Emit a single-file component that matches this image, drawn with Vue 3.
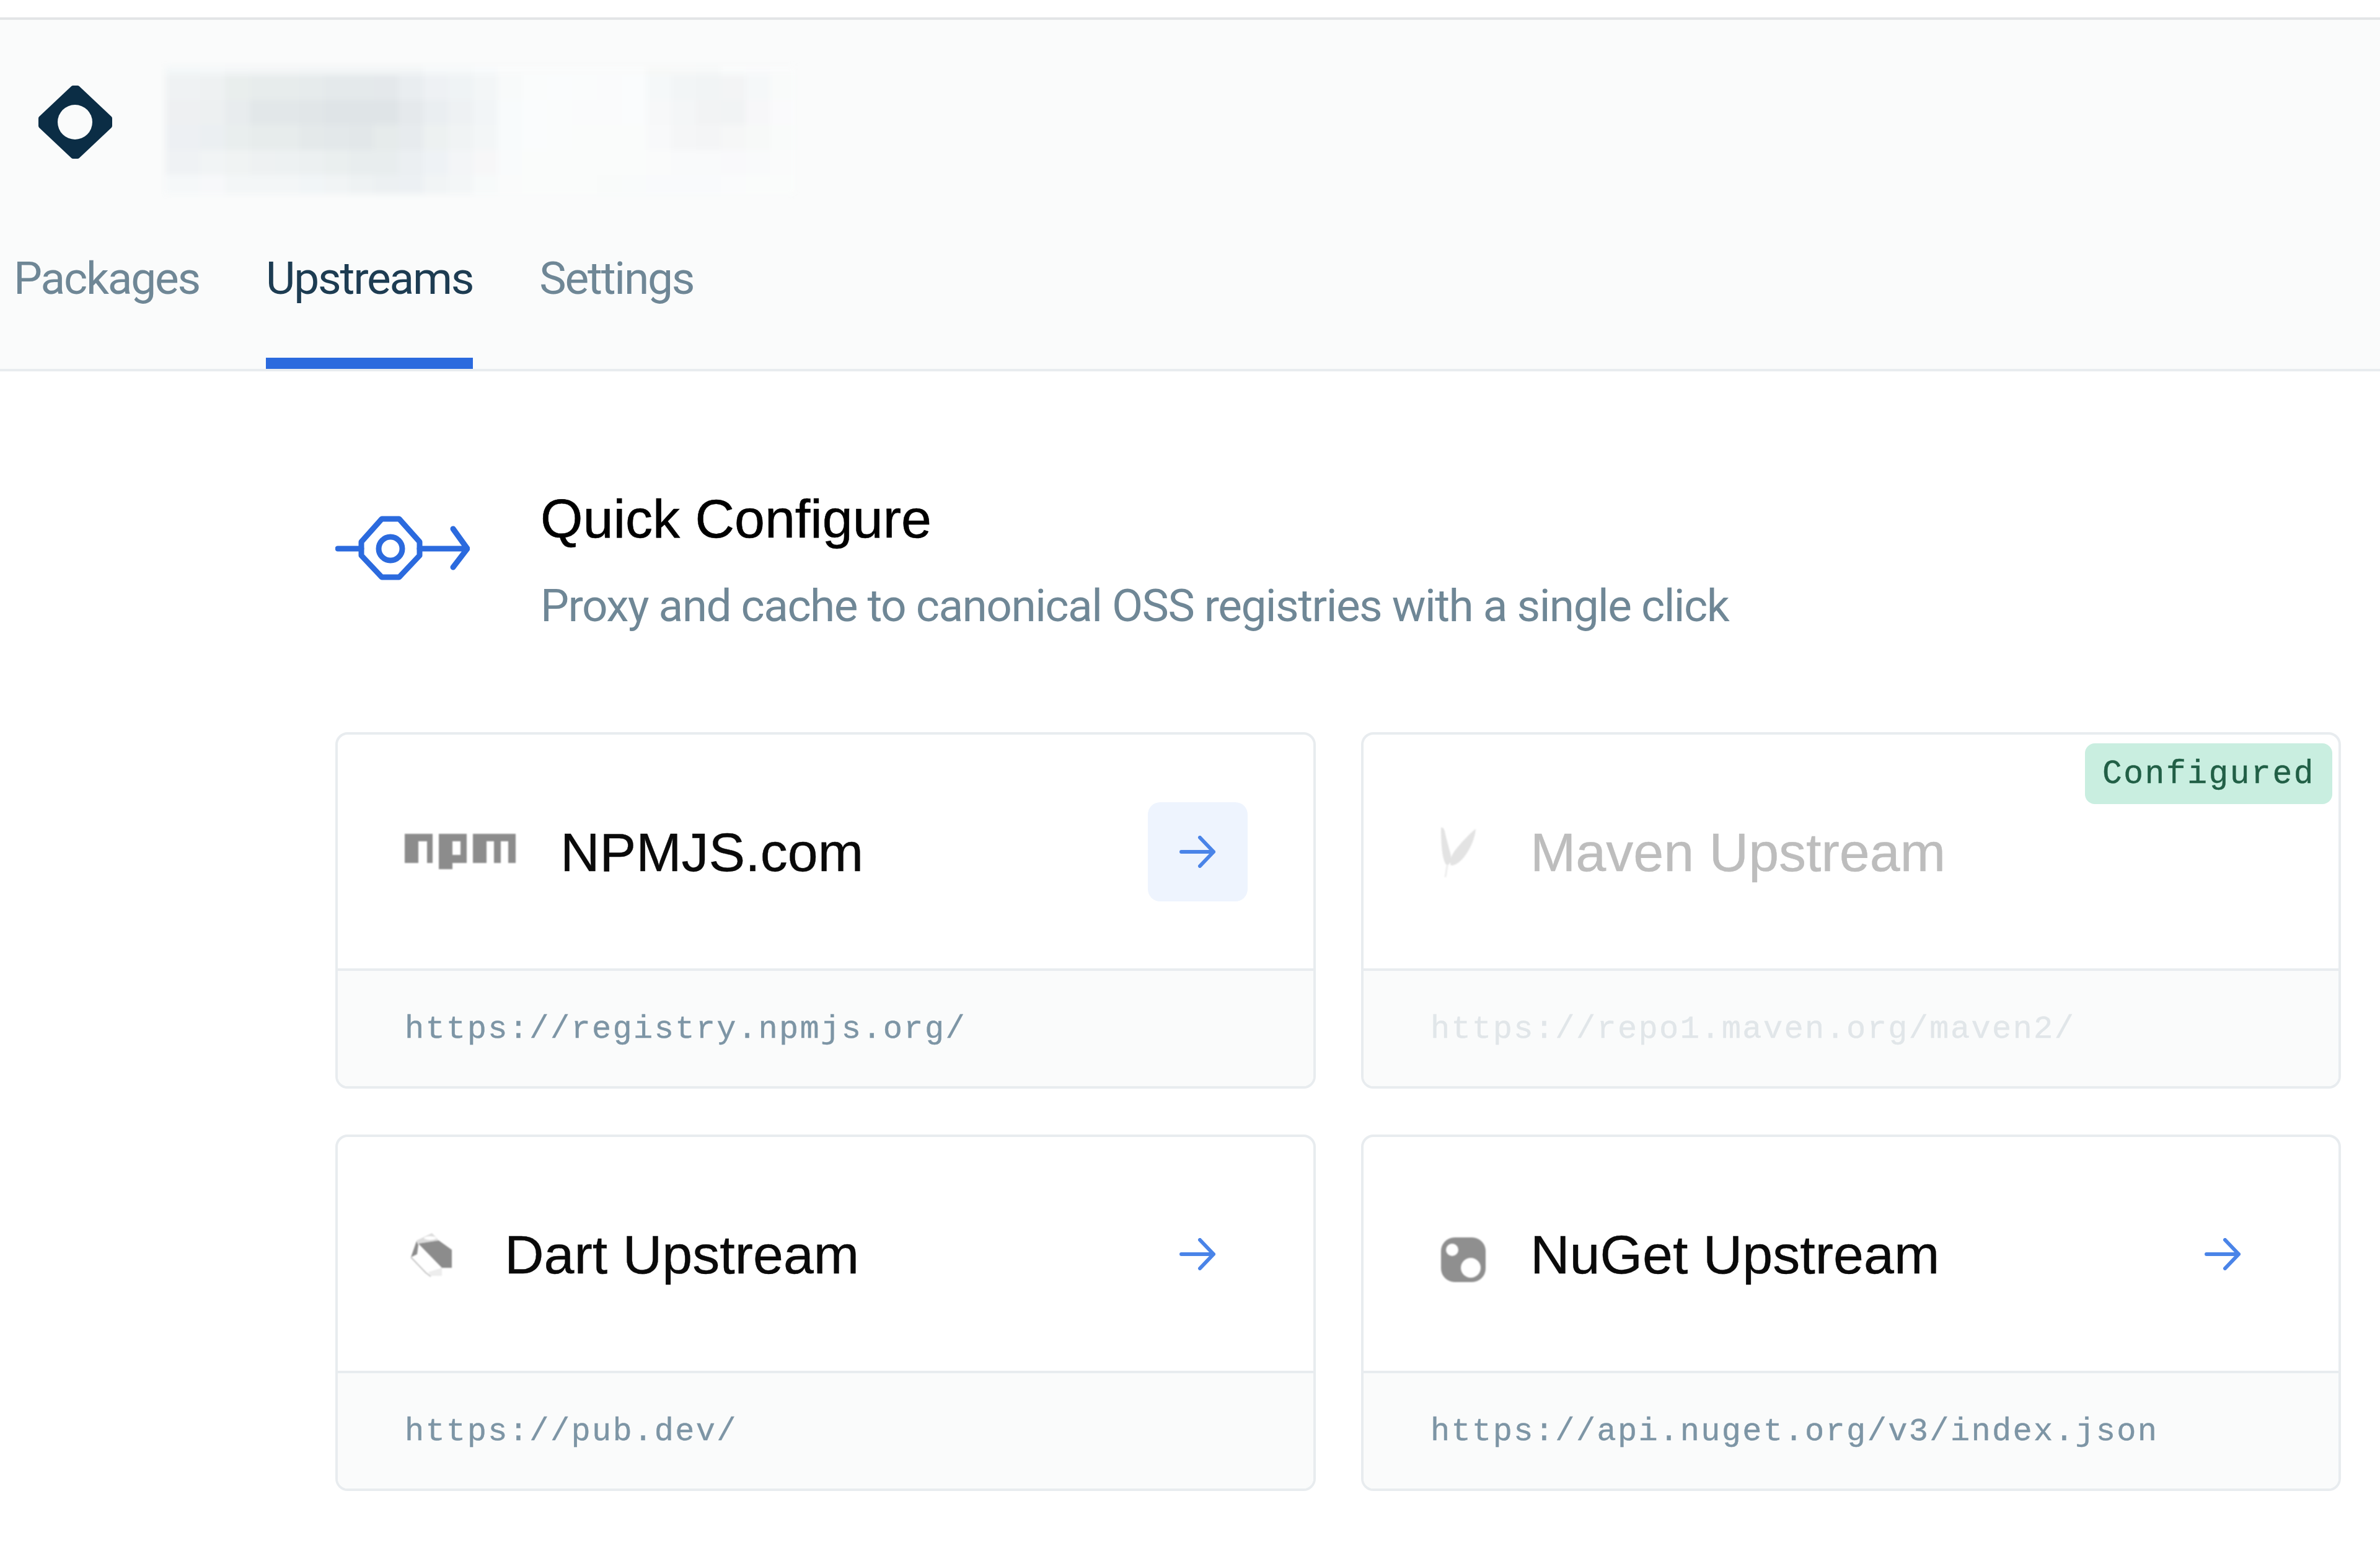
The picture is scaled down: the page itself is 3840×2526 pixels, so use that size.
<script setup>
const blurColors = [
  'f3f7f8 f4f7f8 f3f6f7 f3f5f6 f3f5f6 f2f5f6 f2f5f6 f2f5f6 f2f5f6 f2f5f6 f5f8f9 f5f8f9 f7fafb fafbfb fafbfb fafbfb fafbfb fafbfb fafbfb f7f8f7 f7f8f8 f6f8f8 f9fbfb f9fafb fafbfb',
  'eff2f3 eef1f2 e9eeed e7ecec e7ecec e6ebec e4e9eb e4e9eb e4e8eb e9edf0 eef1f4 eff3f5 f3f6f7 f8fafa fafcfc fafcfd fafcfc fafbfc fafcfd f5f8f9 f2f5f6 f1f4f5 f3f4f5 f5f8f9 f9fbfa',
  'eef0f2 edf0f1 e8ecee e2e7e9 e2e7e9 e1e6e8 dfe4e7 dfe4e7 dfe4e7 e5e9ec eaeef1 eef1f3 f2f5f7 f8fbfc fafcfd fafcfc fafbfc fafbfc fafcfd f7f8f9 f4f6f7 f2f3f4 f1f3f4 f7f7f9 fafafc',
  'edf0f3 ebeff2 e9eeee e7ecec e7ecec e4e9ea e3e8ea e2e7e9 e6ebeb e7ebee edf1f1 f0f3f4 f3f6f7 f8fbfc fafcfd fafcfc fafcfb fafcfb fafcfb f8f9fa f5f6f7 f4f5f6 f6f7f7 f7f9f8 f9fbfa',
  'eff2f4 f1f4f5 f0f3f3 eef1f2 edf1f2 ecf0f1 eaefef e8edee e8edee ebeff2 eef2f5 f3f5f7 f7f7f8 f9fbfc fafcfb fafcfb fafcfb fafcfb fafcfb fafbfb f9fafb f9fafb f9f9fb f9fafb fafbfb',
  'f5f8f9 f7f8fa f3f6f7 f3f6f7 f3f6f7 f1f5f7 f1f4f5 eef2f3 ecf0f2 ecf0f3 f1f4f5 f3f6f7 f7fafa fafbfb fafcfb fafcfb fafcfb f9fbfa f9fbfb f9fafc f9fafc f9fafc fafbfc fafcfb fafcfb'
]
const blurCells = blurColors.flatMap((row) => row.split(' ').map((c) => '#' + c))

const tabs = [
  { label: 'Packages', active: false },
  { label: 'Upstreams', active: true },
  { label: 'Settings', active: false }
]

const cards = [
  { id: 'npm', name: 'NPMJS.com', url: 'https://registry.npmjs.org/', action: 'button' },
  { id: 'maven', name: 'Maven Upstream', url: 'https://repo1.maven.org/maven2/', configured: true },
  { id: 'dart', name: 'Dart Upstream', url: 'https://pub.dev/', action: 'plain' },
  { id: 'nuget', name: 'NuGet Upstream', url: 'https://api.nuget.org/v3/index.json', action: 'plain' }
]
</script>

<template>
  <div class="page">
    <header class="header">
      <div class="brand">
        <svg class="logo" width="119" height="118" viewBox="0 0 119 118">
          <polygon points="56,4 63,4 115,53 115,65 63,114 56,114 4,65 4,53" fill="#0b2d45" stroke="#0b2d45" stroke-width="8" stroke-linejoin="round" />
          <circle cx="59" cy="59" r="28" fill="#fafbfb" />
        </svg>
        <div class="blur">
          <div v-for="(c, i) in blurCells" :key="i" :style="{ background: c }"></div>
        </div>
      </div>
      <nav class="tabs">
        <div v-for="t in tabs" :key="t.label" class="tab" :class="{ active: t.active }">{{ t.label }}</div>
      </nav>
    </header>

    <main class="main">
      <section class="intro">
        <svg class="intro-icon" width="217" height="104" viewBox="0 0 217 104" fill="none" stroke="#2b6ade" stroke-width="9" stroke-linecap="round" stroke-linejoin="round">
          <path d="M75 5H103L136 42V64L103 99H75L42 64V42Z" />
          <circle cx="89" cy="53" r="19" />
          <path d="M4 53H42M136 53H213M190 21L213 53L190 83" />
        </svg>
        <div>
          <h1 class="title">Quick Configure</h1>
          <p class="sub">Proxy and cache to canonical OSS registries with a single click</p>
        </div>
      </section>

      <div class="grid">
        <article v-for="card in cards" :key="card.id" class="card" :class="{ muted: card.configured }">
          <div class="card-head">
            <svg v-if="card.id === 'npm'" class="mark" width="179" height="83" viewBox="0 0 179 83" fill="#8c8c8c">
              <path d="M0 13H45V60H36V25H22V60H0Z" />
              <path fill-rule="evenodd" d="M55 13H100V60H77V70H55ZM77 25V47H90V25Z" />
              <path d="M110 13H179V60H167V25H155V60H144V25H132V60H110Z" />
            </svg>
            <svg v-else-if="card.id === 'maven'" class="mark" width="89" height="120" viewBox="0 0 89 120" fill="#e3e3e3">
              <path d="M17 21C21 20 23 25 24 32L33 66C34 74 31 81 27 82C21 78 17 60 17 21Z" />
              <path d="M73 23C66 28 50 44 38 60C33 68 30 76 33 82C42 82 50 74 56 66C66 52 72 36 73 23Z" />
              <path d="M27 82L24 101" stroke="#eeeeee" stroke-width="3" />
            </svg>
            <svg v-else-if="card.id === 'dart'" class="mark" width="89" height="120" viewBox="0 0 89 120">
              <path d="M44 26L19 38L9 65L34 90L42 96L60 95V82H76V53L52 32Z" fill="#ffffff" />
              <path d="M19 38L44 26L55 38L22 43Z" fill="#dcdcdc" />
              <ellipse cx="41" cy="34" rx="10" ry="3" fill="#ffffff" />
              <path d="M22 43L55 38L76 53V82H60Z" fill="#8c8c8c" />
              <path d="M19 39L10 65L20 60L22 45Z" fill="#8c8c8c" />
              <path d="M10 65L34 90L42 96" fill="none" stroke="#c4c4c4" stroke-width="2" />
              <path d="M38 89L60 82V95H42Z" fill="#ededed" />
            </svg>
            <svg v-else class="mark" width="89" height="120" viewBox="0 0 89 120">
              <rect x="17" y="33" width="72" height="72" rx="22" fill="#8f8f8f" />
              <circle cx="35" cy="53" r="10" fill="#ffffff" />
              <circle cx="65" cy="82" r="16" fill="#ffffff" />
            </svg>
            <span class="name">{{ card.name }}</span>
            <span v-if="card.action" class="go" :class="{ filled: card.action === 'button' }">
              <svg width="60" height="52" viewBox="0 0 60 52" fill="none" stroke="#4a84e8" stroke-width="6" stroke-linecap="round" stroke-linejoin="round">
                <path d="M3 26H55M33 3L55 26L33 49" />
              </svg>
            </span>
            <span v-if="card.configured" class="badge">Configured</span>
          </div>
          <div class="card-foot">{{ card.url }}</div>
        </article>
      </div>
    </main>
  </div>
</template>

<style>
html, body { background: #ffffff; }
</style>

<style scoped>
.page {
  width: 3840px;
  height: 2526px;
  overflow: hidden;
  background: #ffffff;
  padding-top: 28px;
  box-sizing: border-box;
  font-family: "Liberation Sans", sans-serif;
}
.header {
  height: 571px;
  box-sizing: border-box;
  background: #fafbfb;
  border-top: 4px solid #e3e5e7;
  border-bottom: 4px solid #e8ecef;
  display: flex;
  flex-direction: column;
}
.brand {
  display: flex;
  align-items: flex-start;
  padding: 75px 0 0 62px;
}
.logo { margin-top: 31px; flex: none; }
.blur {
  margin-left: 86px;
  display: grid;
  grid-template-columns: 56px repeat(24, 40px);
  grid-template-rows: 14px 40px 40px 41px 40px 31px;
  filter: blur(5px);
}
.tabs {
  display: flex;
  gap: 107px;
  margin-top: auto;
  padding-left: 22px;
}
.tab {
  font-family: "Roboto", sans-serif;
  font-size: 73px;
  letter-spacing: -2.2px;
  line-height: 86px;
  color: #6f8796;
  padding-bottom: 85px;
  border-bottom: 18px solid transparent;
}
.tab.active {
  color: #1d3c52;
  border-bottom-color: #2b6ade;
}
.main { padding: 188px 64px 0 541px; }
.intro { display: flex; align-items: flex-start; }
.intro-icon { flex: none; margin: 45px 114px 0 0; }
.title {
  margin: 0;
  font-size: 88px;
  font-weight: 400;
  line-height: 100px;
  color: #000000;
  -webkit-text-stroke: 0.6px #000;
}
.sub {
  margin: 47px 0 0;
  font-family: "Roboto", sans-serif;
  font-size: 73px;
  letter-spacing: -1.55px;
  line-height: 86px;
  color: #6f8796;
}
.grid {
  display: grid;
  grid-template-columns: 1582px 1581px;
  column-gap: 73px;
  row-gap: 74px;
  margin-top: 161px;
}
.card {
  border: 4px solid #e8ecef;
  border-radius: 20px;
  overflow: hidden;
  display: flex;
  flex-direction: column;
  height: 575px;
  box-sizing: border-box;
  background: #ffffff;
}
.card-head {
  position: relative;
  height: 377px;
  flex: none;
  display: flex;
  align-items: center;
  gap: 72px;
  padding: 0 106px 0 108px;
  box-sizing: border-box;
}
.mark { flex: none; filter: blur(1px); }
.name {
  font-size: 88px;
  line-height: 100px;
  color: #0a0a0a;
  padding-top: 2px;
  -webkit-text-stroke: 0.4px currentColor;
}
.go {
  margin-left: auto;
  width: 161px;
  height: 160px;
  flex: none;
  display: flex;
  align-items: center;
  justify-content: center;
  border-radius: 20px;
}
.go.filled { background: #eef4fe; }
.badge {
  position: absolute;
  top: 14px;
  right: 10px;
  width: 399px;
  height: 98px;
  border-radius: 16px;
  background: #c9eee0;
  color: #215f46;
  font-family: "Liberation Mono", monospace;
  font-size: 53px;
  letter-spacing: 2.5px;
  line-height: 100px;
  text-align: center;
  -webkit-text-stroke: 0.4px currentColor;
}
.card-foot {
  flex: 1;
  border-top: 4px solid #e8ecef;
  background: #fafbfb;
  padding: 3px 106px 0 108px;
  display: flex;
  align-items: center;
  font-family: "Liberation Mono", monospace;
  font-size: 52px;
  letter-spacing: 2.35px;
  color: #7d95a5;
  -webkit-text-stroke: 0.4px currentColor;
}
.muted .name { color: #bdbdbd; }
.muted .card-foot { color: #e1e6e9; }
</style>
